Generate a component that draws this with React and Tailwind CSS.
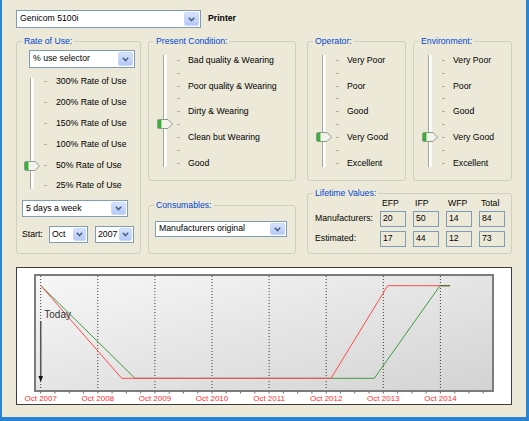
import React from 'react';

const Chevron = () => (
  <svg width="7" height="5" viewBox="0 0 7 5">
    <path d="M0.8 0.8 L3.5 3.6 L6.2 0.8" fill="none" stroke="#4d6185" strokeWidth="1.6" />
  </svg>
);

const Dropdown = ({ value, className, btnClass = 'w-[15px]', padClass = 'pl-[3px]' }) => (
  <div className={`flex items-stretch border border-[#7f9db9] bg-white ${className}`}>
    <span className={`flex flex-1 items-center whitespace-nowrap ${padClass}`}>{value}</span>
    <span className={`m-px flex shrink-0 items-center justify-center rounded-[2px] border border-[#c9d8fb] bg-gradient-to-b from-[#d6e2fd] to-[#b4c9f6] ${btnClass}`}>
      <Chevron />
    </span>
  </div>
);

const Thumb = () => (
  <svg width="17" height="10" viewBox="0 0 17 10">
    <path
      d="M1.5 0.5 H11 L15.5 5 L11 9.5 H1.5 Q0.5 9.5 0.5 8.5 V1.5 Q0.5 0.5 1.5 0.5 Z"
      fill="#f3f2ec"
      stroke="#8c9a8a"
    />
    <rect x="1" y="1" width="3" height="8" fill="#3cae3c" />
    <rect x="4" y="1" width="1" height="8" fill="#9adb95" />
  </svg>
);

const Slider = ({ rows, rowClass, trackClass, thumbClass, labelClass }) => (
  <div className="flex">
    <div className="relative w-[20px]">
      <div className={`absolute left-[6px] w-[4px] border-x border-l-[#a7a69c] border-r-[#f6f5f0] bg-white ${trackClass}`} />
      <div className={`absolute left-0 ${thumbClass}`}>
        <Thumb />
      </div>
    </div>
    <div className="flex flex-col">
      {rows.map((label, i) => (
        <div key={i} className={`flex items-center ${rowClass}`}>
          <span className="h-px w-[3px] bg-[#aeac9f]" />
          {label && <span className={`whitespace-nowrap ${labelClass}`}>{label}</span>}
        </div>
      ))}
    </div>
  </div>
);

const Group = ({ title, className, children }) => (
  <fieldset className={`rounded-[3px] border border-[#d0d0bf] ${className}`}>
    <legend className="ml-[5px] px-[2px] leading-[11px] text-[#0046d5]">{title}</legend>
    {children}
  </fieldset>
);

const Field = ({ value }) => (
  <div className="flex h-[16px] w-[26px] items-center border border-[#7f9db9] pl-[2px]">{value}</div>
);

const quality = ['Very Poor', null, 'Poor', null, 'Good', null, 'Very Good', null, 'Excellent'];

const gridX = [23.7, 80.8, 137.9, 195, 252.1, 309.2, 366.3, 423.4];
const years = [2007, 2008, 2009, 2010, 2011, 2012, 2013, 2014];
const minor = Array.from({ length: 32 }, (_, i) => 23.7 + i * 14.275).filter((x) => x < 476);

const Chart = () => (
  <div className="h-[138px] w-[496px] border border-[#3c3c3c] bg-white">
    <svg width="494" height="136" viewBox="0 0 494 136">
      <defs>
        <linearGradient id="plotbg" x1="0" y1="0" x2="1" y2="1">
          <stop offset="0" stopColor="#f7f7f7" />
          <stop offset="1" stopColor="#d3d3d3" />
        </linearGradient>
      </defs>
      <rect x="18" y="7" width="458" height="116" fill="url(#plotbg)" stroke="#7c7c7c" strokeWidth="2" />
      {gridX.map((x) => (
        <line key={x} x1={x} x2={x} y1="8" y2="122" stroke="#3a3a3a" strokeDasharray="1 2" />
      ))}
      {minor.map((x) => (
        <line key={x} x1={x} x2={x} y1="123" y2="125.5" stroke="#6a6a6a" />
      ))}
      <polyline points="23.7,17.5 118,110.3 357.3,110.3 423,17.7 433,17.7" fill="none" stroke="#3f9a3f" />
      <polyline points="23.7,17.5 104.7,110.3 314,110.3 370.7,17.7 433,17.7" fill="none" stroke="#ff4a4a" />
      <polyline points="423,17.7 433,17.7" fill="none" stroke="#2f7f2f" />
      <text x="27.3" y="50" fontSize="10" fill="#333" fontFamily="Liberation Sans, Arial, sans-serif">
        Today
      </text>
      <line x1="23.7" x2="23.7" y1="53" y2="109" stroke="#555" strokeWidth="1.5" />
      <polygon points="21.4,108 26,108 23.7,114" fill="#111" />
      {gridX.map((x, i) => (
        <text
          key={x}
          x={x}
          y="132.8"
          textAnchor="middle"
          fontSize="8"
          fill="#ff2e2e"
          fontFamily="Liberation Sans, Arial, sans-serif"
        >
          Oct {years[i]}
        </text>
      ))}
    </svg>
  </div>
);

export default function App() {
  return (
    <div className="h-[421px] w-[529px] overflow-hidden border-b-4 border-l-2 border-r-[3px] border-[#2a84d2] bg-[#ece9d8] pl-[14px] pt-[10px] font-['Liberation_Sans',Arial,sans-serif] text-[8.7px] text-black">
      {/* printer selector */}
      <div className="flex items-center">
        <Dropdown value="Genicom 5100i" className="h-[18px] w-[185px]" />
        <span className="ml-[7px] font-bold">Printer</span>
      </div>

      <div className="mt-[8px] flex">
        {/* rate of use */}
        <Group title="Rate of Use:" className="h-[218px] w-[125px]">
          <div className="mt-[3px] pl-[12px]">
            <Dropdown value="% use selector" className="h-[18px] w-[106px]" />
          </div>
          <div className="mt-[3.5px] pl-[7px]">
            <Slider
              rows={['300% Rate of Use', '200% Rate of Use', '150% Rate of Use', '100% Rate of Use', '50% Rate of Use', '25% Rate of Use']}
              rowClass="h-[20.8px]"
              trackClass="top-[6px] bottom-[7px]"
              thumbClass="top-[89px]"
              labelClass="ml-[9px]"
            />
          </div>
          <div className="mt-[4px] pl-[5px]">
            <Dropdown value="5 days a week" className="h-[17px] w-[106px]" />
          </div>
          <div className="mt-[9px] flex items-center pl-[5px]">
            <span className="w-[27px]">Start:</span>
            <Dropdown value="Oct" className="h-[17px] w-[39px]" btnClass="w-[13px]" padClass="pl-[2px]" />
            <Dropdown value="2007" className="ml-[7px] h-[17px] w-[39px]" btnClass="w-[13px]" padClass="pl-[2px]" />
          </div>
        </Group>

        {/* condition + consumables */}
        <div className="ml-[7px] flex w-[148px] flex-col">
          <Group title="Present Condition:" className="h-[145px] w-[148px]">
            <div className="mt-[7px] pl-[8px]">
              <Slider
                rows={['Bad quality & Wearing', null, 'Poor quality & Wearing', null, 'Dirty & Wearing', null, 'Clean but Wearing', null, 'Good']}
                rowClass="h-[12.83px]"
                trackClass="top-[1px] bottom-[2px]"
                thumbClass="top-[65px]"
                labelClass="ml-[8px]"
              />
            </div>
          </Group>
          <Group title="Consumables:" className="mt-[19px] h-[54px] w-[148px]">
            <div className="mt-[10px] pl-[6px]">
              <Dropdown value="Manufacturers original" className="h-[16px] w-[132px]" />
            </div>
          </Group>
        </div>

        {/* operator / environment / lifetime */}
        <div className="ml-[11px] flex w-[205px] flex-col">
          <div className="flex gap-[7px]">
            <Group title="Operator:" className="h-[145px] w-[99px]">
              <div className="mt-[7px] pl-[8px]">
                <Slider rows={quality} rowClass="h-[12.83px]" trackClass="top-[1px] bottom-[2px]" thumbClass="top-[78px]" labelClass="ml-[8px]" />
              </div>
            </Group>
            <Group title="Environment:" className="h-[145px] w-[99px]">
              <div className="mt-[7px] pl-[8px]">
                <Slider rows={quality} rowClass="h-[12.83px]" trackClass="top-[1px] bottom-[2px]" thumbClass="top-[78px]" labelClass="ml-[8px]" />
              </div>
            </Group>
          </div>
          <Group title="Lifetime Values:" className="mt-[7px] h-[66px] w-[205px]">
            <div className="pl-[7px]">
              <div className="flex h-[9px] items-center gap-[7px]">
                <span className="w-[58px]" />
                <span className="w-[26px] pl-[2px]">EFP</span>
                <span className="w-[26px] pl-[2px]">IFP</span>
                <span className="w-[26px] pl-[2px]">WFP</span>
                <span className="w-[26px] pl-[2px]">Total</span>
              </div>
              <div className="mt-[3px] flex items-center gap-[7px]">
                <span className="w-[58px] whitespace-nowrap">Manufacturers:</span>
                <Field value="20" />
                <Field value="50" />
                <Field value="14" />
                <Field value="84" />
              </div>
              <div className="mt-[4px] flex items-center gap-[7px]">
                <span className="w-[58px]">Estimated:</span>
                <Field value="17" />
                <Field value="44" />
                <Field value="12" />
                <Field value="73" />
              </div>
            </div>
          </Group>
        </div>
      </div>

      <div className="mt-[13px]">
        <Chart />
      </div>
    </div>
  );
}
